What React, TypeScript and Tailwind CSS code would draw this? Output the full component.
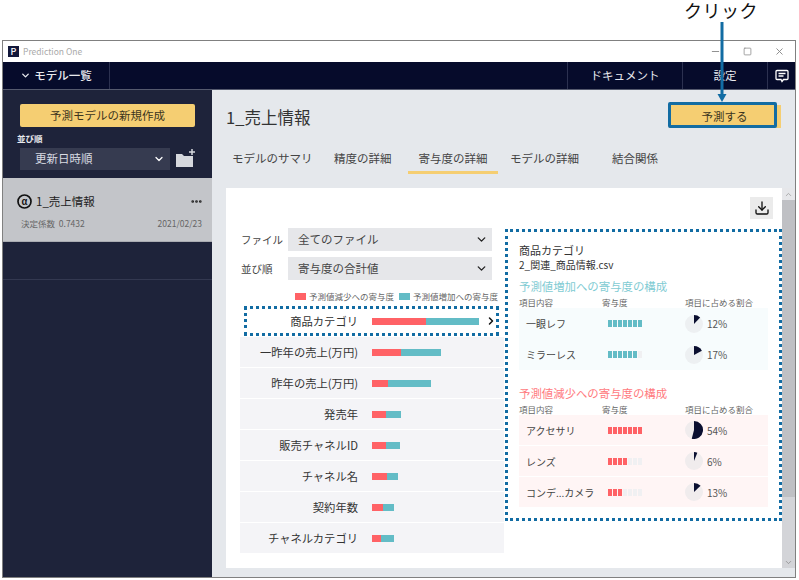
import { ChevronDown, ChevronRight, Download, Ellipsis, Minus, Square, X } from 'lucide-react'

const font = { fontFamily: '"Noto Sans CJK JP", "Noto Sans", sans-serif' }

interface FactorRow {
  label: string
  red: number
  teal: number
}

interface DetailRow {
  name: string
  filled: number
  pct: number
}

const factors: FactorRow[] = [
  { label: '一昨年の売上(万円)', red: 29, teal: 40 },
  { label: '昨年の売上(万円)', red: 16, teal: 43 },
  { label: '発売年', red: 14, teal: 15 },
  { label: '販売チャネルID', red: 14, teal: 14 },
  { label: 'チャネル名', red: 15, teal: 11 },
  { label: '契約年数', red: 11, teal: 11 },
  { label: 'チャネルカテゴリ', red: 9, teal: 13 },
]

const plusRows: DetailRow[] = [
  { name: '一眼レフ', filled: 7, pct: 12 },
  { name: 'ミラーレス', filled: 6, pct: 17 },
]

const minusRows: DetailRow[] = [
  { name: 'アクセサリ', filled: 7, pct: 54 },
  { name: 'レンズ', filled: 4, pct: 6 },
  { name: 'コンデ...カメラ', filled: 3, pct: 13 },
]

function Pie({ pct, bg }: { pct: number; bg: string }) {
  const a = (pct / 100) * 2 * Math.PI
  const x = 9 + 9 * Math.sin(a)
  const y = 9 - 9 * Math.cos(a)
  return (
    <svg width="18" height="18" viewBox="0 0 18 18" className="shrink-0">
      <circle cx="9" cy="9" r="9" fill={bg} />
      <path d={`M9 9 L9 0 A9 9 0 ${pct > 50 ? 1 : 0} 1 ${x} ${y} Z`} fill="#0a0f30" />
    </svg>
  )
}

function Detail({ rows, plus }: { rows: DetailRow[]; plus: boolean }) {
  return (
    <div>
      <div className={`text-[11.4px] leading-[18px] ${plus ? 'text-[#7fcbd3]' : 'text-[#ff7a7e]'}`}>
        {plus ? '予測値増加への寄与度の構成' : '予測値減少への寄与度の構成'}
      </div>
      <div className="flex text-[8.5px] leading-[11px] text-[#666] mt-[2px]">
        <div className="w-[83px]">項目内容</div>
        <div className="w-[83px]">寄与度</div>
        <div>項目に占める割合</div>
      </div>
      <div className={`flex flex-col w-[249px] ${plus ? '' : 'gap-[1px]'}`}>
        {rows.map((r) => (
          <div
            key={r.name}
            className={`flex items-center text-[10px] text-[#444] ${plus ? 'h-[31px] bg-[#f7fcfd]' : 'h-[30px] bg-[#fff5f5]'}`}
          >
            <div className="w-[89px] pl-[7px] whitespace-nowrap">{r.name}</div>
            <div className="flex gap-[1px] w-[77px]">
              {[0, 1, 2, 3, 4, 5, 6].map((i) => (
                <div
                  key={i}
                  className={`w-[4px] h-[7px] ${
                    i < r.filled
                      ? plus
                        ? 'bg-[#63bcc6]'
                        : 'bg-[#ff6266]'
                      : 'bg-[#f0f0f2]'
                  }`}
                />
              ))}
            </div>
            <Pie pct={r.pct} bg={plus ? '#edf0f2' : '#f0eced'} />
            <div className="ml-[4px] text-[#555]">{r.pct}%</div>
          </div>
        ))}
      </div>
    </div>
  )
}

function FakeSelect({ label, value }: { label: string; value: string }) {
  return (
    <div className="flex items-center">
      <div className="w-[48px] pl-[1px] text-[10.5px] text-[#444]">{label}</div>
      <div className="w-[204px] h-[23px] bg-[#e6e7ea] flex items-center justify-between pl-[10px] pr-[4px] text-[11.5px] text-[#444]">
        <span>{value}</span>
        <ChevronDown size={13} strokeWidth={2.5} className="text-[#222]" />
      </div>
    </div>
  )
}

export default function App() {
  return (
    <div className="relative w-[799px] h-[580px] bg-white overflow-hidden pt-[40px] pl-[2px] pr-[3px]" style={font}>
      <div className="h-[538px] border border-[#808080] flex flex-col">
        {/* タイトルバー */}
        <div className="h-[21px] shrink-0 bg-white flex items-center pl-[5px] pr-[10px]">
          <div className="w-[11px] h-[11px] bg-[#12173a] text-white text-[9px] leading-[11px] text-center font-medium">P</div>
          <div className="ml-[4px] text-[8.5px] text-[#aaa]">Prediction One</div>
          <div className="ml-auto flex items-center gap-[22px] text-[#888]">
            <Minus size={11} />
            <Square size={9} />
            <X size={11} />
          </div>
        </div>

        {/* ナビ */}
        <div className="h-[28px] shrink-0 bg-[#060b2b] flex items-center text-[#e8e9ee] text-[11.5px] border-b border-[#555a6e]">
          <div className="w-[107px] h-full flex items-center justify-center gap-[3px] border-r border-[#2c3150]">
            <ChevronDown size={11} strokeWidth={3} />
            <span className="font-medium">モデル一覧</span>
          </div>
          <div className="ml-auto w-[115px] h-full flex items-center justify-center border-l border-[#2c3150]">ドキュメント</div>
          <div className="w-[85px] h-full flex items-center justify-center border-l border-[#2c3150]">設定</div>
          <div className="w-[28px] h-full flex items-center justify-center border-l border-[#2c3150]">
            <svg width="14" height="14" viewBox="0 0 14 14" fill="none" stroke="#fff" strokeWidth="1.3">
              <path d="M2 1.5h10a1 1 0 0 1 1 1v7a1 1 0 0 1-1 1H8.5L7 12.5 6 10.5H2a1 1 0 0 1-1-1v-7a1 1 0 0 1 1-1z" />
              <path d="M3.5 4.5h7M3.5 7h5" />
            </svg>
          </div>
        </div>

        <div className="flex flex-1 min-h-0">
          {/* サイドバー */}
          <div className="w-[209px] shrink-0 bg-[#1e233a] flex flex-col">
            <div className="h-[14px]" />
            <div className="mx-[17px] h-[23px] bg-[#f5ce72] rounded-[2px] flex items-center justify-center text-[11.5px] text-[#3c3520]">
              予測モデルの新規作成
            </div>
            <div className="ml-[14px] mt-[4px] text-[8.5px] leading-[14px] font-bold text-[#e8e9ee]">並び順</div>
            <div className="flex items-center ml-[17px] mt-[3px]">
              <div className="w-[150px] h-[22px] bg-[#363b50] flex items-center justify-between pl-[15px] pr-[5px] text-[11.5px] text-[#d9dbe2]">
                <span>更新日時順</span>
                <ChevronDown size={12} strokeWidth={2.5} className="text-white" />
              </div>
              <svg width="21" height="18" viewBox="0 0 21 18" className="ml-[5px] -mt-[3px]">
                <path d="M1 5h6l2 2h9v11H1z" fill="#d5d7dd" />
                <path d="M17 0v6M14 3h6" stroke="#d5d7dd" strokeWidth="1.5" />
              </svg>
            </div>
            <div className="mt-[8px] h-[64px] bg-[#c3c5c9] border-b border-[#aaacb2] pl-[14px] pr-[9px] flex flex-col">
              <div className="flex items-center mt-[14px] text-[11.5px] leading-[18px] text-[#222]">
                <svg width="15" height="15" viewBox="0 0 15 15" className="shrink-0 mr-[4px]">
                  <circle cx="7.5" cy="7.5" r="6.5" fill="none" stroke="#111" strokeWidth="1.7" />
                  <text x="7.5" y="10.5" textAnchor="middle" fontSize="9" fontWeight="700" fill="#111">α</text>
                </svg>
                <span>1_売上情報</span>
                <Ellipsis size={13} strokeWidth={3} className="ml-auto" />
              </div>
              <div className="flex justify-between mt-[7px] pl-[4px] pr-[1px] text-[8.5px] leading-[13px] text-[#666]">
                <span>決定係数&nbsp; 0.7432</span>
                <span>2021/02/23</span>
              </div>
            </div>
            <div className="mt-[37px] border-b border-[#333850]" />
          </div>

          {/* メイン */}
          <div className="flex-1 min-w-0 bg-[#e5e8ec] flex flex-col">
            <div className="flex items-center justify-between h-[52px] pl-[14px] shrink-0">
              <div className="text-[16.5px] text-[#333] mt-[2px]">1_売上情報</div>
              <div className="w-[112px] h-[23px] mr-[14px] mt-[1px] bg-[#f5ce72] flex items-center justify-center pr-[1px] text-[11.5px] text-[#3c3520]">
                予測する
              </div>
            </div>
            <div className="flex h-[46px] shrink-0 pl-[12px] text-[11.5px] text-[#444]">
              <div className="w-[100px] pt-[8px] pl-[8px]">モデルのサマリ</div>
              <div className="w-[84px] pt-[8px] pl-[10px]">精度の詳細</div>
              <div className="w-[90px] h-[32px] pt-[8px] border-b-[3px] border-[#f5ce72] text-center">寄与度の詳細</div>
              <div className="w-[114px] pt-[8px] pl-[12px]">モデルの詳細</div>
              <div className="pt-[8px]">結合関係</div>
            </div>

            <div className="flex-1 min-h-0 ml-[14px] flex">
              <div className="flex-1 bg-white flex min-w-0">
                {/* 左カラム */}
                <div className="w-[279px] shrink-0 pl-[14px] pt-[40px]">
                  <div className="flex flex-col gap-[6px]">
                    <FakeSelect label="ファイル" value="全てのファイル" />
                    <FakeSelect label="並び順" value="寄与度の合計値" />
                  </div>
                  <div className="flex justify-end items-center gap-[5px] w-[258px] mt-[10px] h-[12px] text-[8.5px] text-[#666]">
                    <span className="flex items-center gap-[3px]">
                      <i className="block w-[11px] h-[7px] bg-[#ff6266]" />予測値減少への寄与度
                    </span>
                    <span className="flex items-center gap-[3px]">
                      <i className="block w-[11px] h-[7px] bg-[#63bcc6]" />予測値増加への寄与度
                    </span>
                  </div>
                  <div className="relative h-[30px] mt-[4px] w-[255px] ml-[4px] flex items-center border-[3px] border-dotted border-[#126ca3] bg-white text-[11.3px] text-[#333]">
                    <div className="w-[111px] text-right">商品カテゴリ</div>
                    <div className="ml-[14px] flex h-[7px]">
                      <div className="w-[54px] bg-[#ff6266]" />
                      <div className="w-[53px] bg-[#63bcc6]" />
                    </div>
                    <ChevronRight size={12} strokeWidth={3} className="absolute right-[-1px] text-[#111]" />
                  </div>
                  <div className="flex flex-col gap-[1px] mt-[1px]">
                    {factors.map((f) => (
                      <div key={f.label} className="flex items-center h-[30px] w-[264px] bg-[#f4f4f7] text-[11.3px] text-[#333]">
                        <div className="w-[118px] text-right whitespace-nowrap">{f.label}</div>
                        <div className="ml-[14px] flex h-[7px]">
                          <div className="bg-[#ff6266]" style={{ width: f.red }} />
                          <div className="bg-[#63bcc6]" style={{ width: f.teal }} />
                        </div>
                      </div>
                    ))}
                  </div>
                </div>

                {/* 右カラム */}
                <div className="flex-1 min-w-0 pt-[9px]">
                  <div className="flex justify-end pr-[9px]">
                    <div className="w-[23px] h-[22px] bg-[#ebebeb] flex items-center justify-center">
                      <Download size={16} strokeWidth={2} className="text-[#111]" />
                    </div>
                  </div>
                  <div className="mt-[10px] h-[292px] border-[3px] border-dotted border-[#126ca3] pl-[11px] pt-[11px] text-[#333]">
                    <div className="text-[11px] leading-[15px]">商品カテゴリ</div>
                    <div className="text-[10px] leading-[14px] mb-[5px]">2_関連_商品情報.csv</div>
                    <Detail rows={plusRows} plus />
                    <div className="h-[14px]" />
                    <Detail rows={minusRows} plus={false} />
                  </div>
                </div>
              </div>

              {/* スクロールバー */}
              <div className="w-[13px] shrink-0 bg-[#d3d4d8] flex flex-col">
                <div className="h-[12px] bg-[#e6e7ea] flex items-center justify-center">
                  <ChevronDown size={9} className="rotate-180 text-[#999]" />
                </div>
                <div className="h-[297px] bg-[#bfc0c4]" />
                <div className="flex-1" />
                <div className="h-[12px] flex items-center justify-center">
                  <ChevronDown size={9} className="text-[#888]" />
                </div>
              </div>
            </div>
            <div className="h-[9px] shrink-0" />
          </div>
        </div>
      </div>

      {/* 注釈 */}
      <div className="absolute left-[684px] top-0 text-[18px] leading-[20px] tracking-[0.5px] text-[#111]">クリック</div>
      <div className="absolute left-[668px] top-[102px] w-[109px] h-[26px] border-[3px] border-[#126ca3] rounded-[2px]" />
      <svg className="absolute left-[716px] top-[22px]" width="12" height="80" viewBox="0 0 12 80">
        <path d="M6 0V74" stroke="#126ca3" strokeWidth="3" />
        <path d="M1.5 72h9L6 80z" fill="#126ca3" />
      </svg>
    </div>
  )
}
